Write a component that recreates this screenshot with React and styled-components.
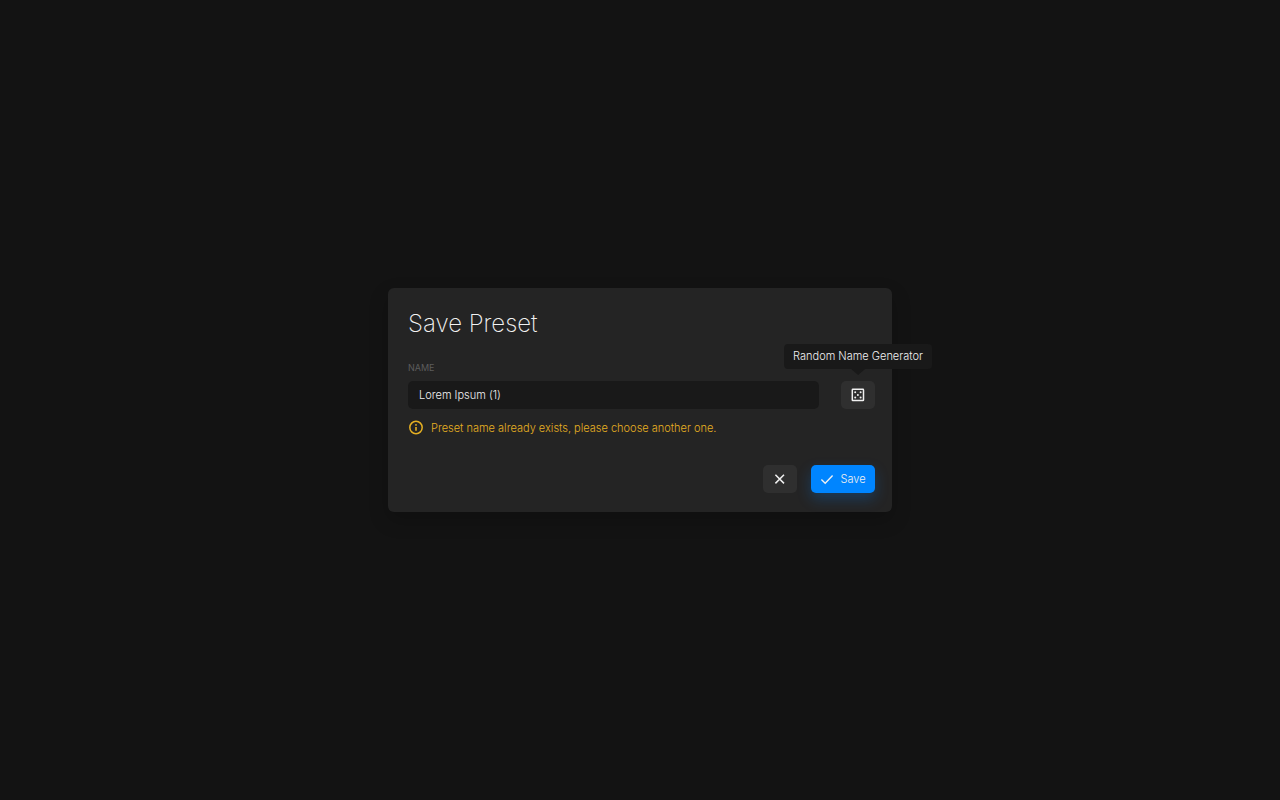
import { useState } from "react";
import styled, { createGlobalStyle } from "styled-components";

const GlobalStyle = createGlobalStyle`
  * {
    box-sizing: border-box;
  }
  body {
    margin: 0;
    background: #131313;
    color: #f0f0f0;
    font-family: Inter, "Liberation Sans", sans-serif;
    font-size: 11px;
    font-weight: 300;
    line-height: 16px;
  }
  button,
  input {
    font: inherit;
    color: inherit;
    border: 0;
  }
`;

const Page = styled.main`
  min-height: 100vh;
  display: flex;
  align-items: center;
  justify-content: center;
  padding: 20px;
`;

const Dialog = styled.form`
  width: 100%;
  max-width: 504px;
  padding: 20px 17px 19px 20px;
  background: #242424;
  border-radius: 6px;
  box-shadow: 0 8px 20px rgba(0, 0, 0, 0.2);
`;

const Title = styled.h1`
  margin: 0 0 20px;
  font-size: 24px;
  font-weight: 200;
  line-height: 32px;
  color: #f2f2f2;
`;

const Label = styled.label`
  display: block;
  margin-bottom: 6px;
  font-size: 9px;
  font-weight: 400;
  line-height: 15px;
  text-transform: uppercase;
  color: #5c5c5c;
`;

const Row = styled.div`
  display: flex;
  gap: 22px;
`;

const Input = styled.input`
  flex: 1;
  min-width: 0;
  height: 28px;
  padding: 0 11px;
  background: #191919;
  border-radius: 5px;
  outline: none;
`;

const Button = styled.button`
  display: flex;
  align-items: center;
  justify-content: center;
  gap: 6px;
  width: ${({ $primary }) => ($primary ? "64px" : "34px")};
  height: 28px;
  padding: 0;
  border-radius: 5px;
  cursor: pointer;
  color: #f0f0f0;
  background: ${({ $primary }) => ($primary ? "#0085ff" : "#2f2f2f")};
  box-shadow: ${({ $primary }) =>
    $primary ? "0 6px 14px rgba(0, 133, 255, 0.25)" : "none"};
`;

const TooltipAnchor = styled.div`
  position: relative;
`;

const Tooltip = styled.div`
  position: absolute;
  bottom: calc(100% + 12px);
  left: 50%;
  transform: translateX(-50%);
  padding: 4px 9px 5px;
  white-space: nowrap;
  background: #191919;
  border-radius: 4px;

  &::after {
    content: "";
    position: absolute;
    top: 100%;
    left: 50%;
    margin-left: -7px;
    border: 7px solid transparent;
    border-top: 6px solid #191919;
    border-bottom: 0;
  }
`;

const Warning = styled.p`
  display: flex;
  align-items: center;
  gap: 7px;
  margin: 11px 0 29px;
  color: #e6b022;
`;

const Actions = styled.div`
  display: flex;
  justify-content: flex-end;
  gap: 14px;
`;

const InfoIcon = () => (
  <svg width="16" height="16" viewBox="0 0 16 16" fill="none">
    <circle cx="8" cy="7.5" r="6.2" stroke="currentColor" strokeWidth="1.5" />
    <path d="M8 6.9v3.9" stroke="currentColor" strokeWidth="1.6" />
    <circle cx="8" cy="4.9" r="0.9" fill="currentColor" />
  </svg>
);

const DiceIcon = () => (
  <svg width="14" height="14" viewBox="0 0 14 14" fill="none">
    <rect
      x="1.3"
      y="1.3"
      width="11.2"
      height="11.2"
      rx="0.6"
      stroke="currentColor"
      strokeWidth="1.5"
    />
    <g fill="currentColor">
      <circle cx="4.2" cy="4.2" r="1" />
      <circle cx="9.6" cy="4.2" r="1" />
      <circle cx="6.9" cy="6.9" r="1" />
      <circle cx="4.2" cy="9.6" r="1" />
      <circle cx="9.6" cy="9.6" r="1" />
    </g>
  </svg>
);

const CloseIcon = () => (
  <svg width="14" height="14" viewBox="0 0 14 14" fill="none">
    <path
      d="M2.4 2.8l8.6 8.6M11 2.8l-8.6 8.6"
      stroke="currentColor"
      strokeWidth="1.5"
    />
  </svg>
);

const CheckIcon = () => (
  <svg width="14" height="14" viewBox="0 0 14 14" fill="none">
    <path
      d="M1.4 7.5l3.8 3.7 7.4-7.7"
      stroke="currentColor"
      strokeWidth="1.4"
    />
  </svg>
);

export default function App() {
  const [name, setName] = useState("Lorem Ipsum (1)");

  return (
    <>
      <GlobalStyle />
      <Page>
        <Dialog onSubmit={(e) => e.preventDefault()}>
          <Title>Save Preset</Title>
          <Label htmlFor="preset-name">Name</Label>
          <Row>
            <Input
              id="preset-name"
              type="text"
              aria-describedby="name-warning"
              value={name}
              onChange={(e) => setName(e.target.value)}
            />
            <TooltipAnchor>
              <Button type="button" aria-labelledby="random-tip">
                <DiceIcon />
              </Button>
              <Tooltip id="random-tip" role="tooltip">
                Random Name Generator
              </Tooltip>
            </TooltipAnchor>
          </Row>
          <Warning id="name-warning">
            <InfoIcon />
            Preset name already exists, please choose another one.
          </Warning>
          <Actions>
            <Button type="button" aria-label="Cancel">
              <CloseIcon />
            </Button>
            <Button type="submit" $primary>
              <CheckIcon />
              Save
            </Button>
          </Actions>
        </Dialog>
      </Page>
    </>
  );
}
